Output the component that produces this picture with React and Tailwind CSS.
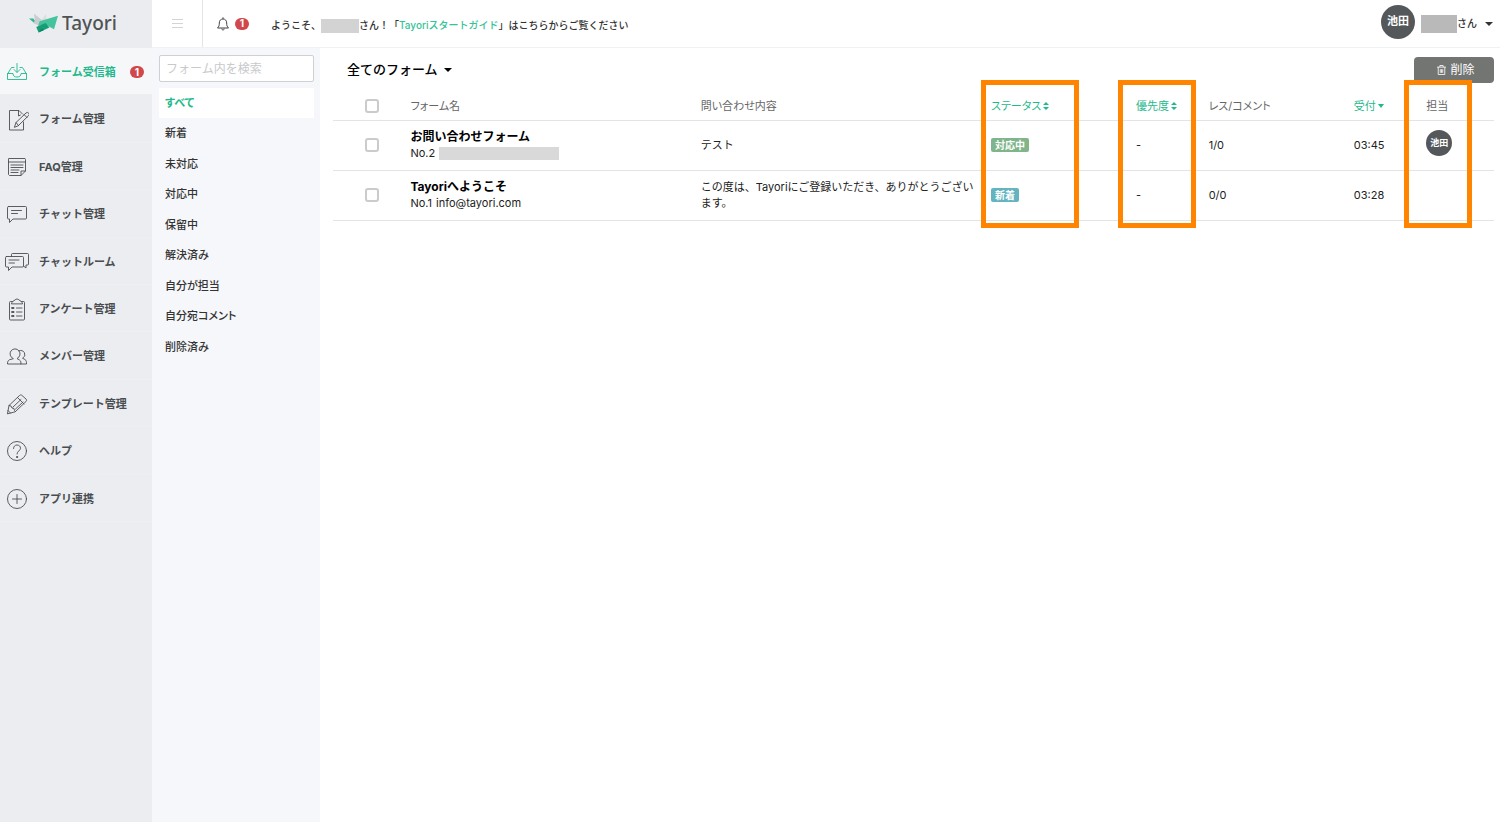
import clsx from 'clsx'

const navItems = [
  { label: 'フォーム受信箱', icon: InboxIcon, active: true, count: 1 },
  { label: 'フォーム管理', icon: FormIcon },
  { label: 'FAQ管理', icon: FaqIcon },
  { label: 'チャット管理', icon: ChatIcon },
  { label: 'チャットルーム', icon: ChatRoomIcon },
  { label: 'アンケート管理', icon: SurveyIcon },
  { label: 'メンバー管理', icon: MembersIcon },
  { label: 'テンプレート管理', icon: PencilIcon },
  { label: 'ヘルプ', icon: HelpIcon },
  { label: 'アプリ連携', icon: AppsIcon },
]

const filters = ['すべて', '新着', '未対応', '対応中', '保留中', '解決済み', '自分が担当', '自分宛コメント', '削除済み']

const rows = [
  {
    id: 2,
    title: 'お問い合わせフォーム',
    email: null,
    body: 'テスト',
    status: '対応中',
    statusClass: 'bg-[#80b58b]',
    replies: '1/0',
    time: '03:45',
    owner: '池田',
  },
  {
    id: 1,
    title: 'Tayoriへようこそ',
    email: 'info@tayori.com',
    body: 'この度は、Tayoriにご登録いただき、ありがとうございます。',
    status: '新着',
    statusClass: 'bg-[#64b4c0]',
    replies: '0/0',
    time: '03:28',
    owner: null,
  },
]

function LineIcon({ children }) {
  return (
    <svg viewBox="0 0 24 24" className="size-6 shrink-0" fill="none" stroke="currentColor" strokeWidth="0.9" strokeLinejoin="round" strokeLinecap="round" aria-hidden="true">
      {children}
    </svg>
  )
}

function InboxIcon() {
  return (
    <LineIcon>
      <path d="M9 7.500H6.500L2.500 14v5.500h19V14l-4-6.500H15" />
      <path d="M2.500 13.500H8c0 2.500 1.500 3.500 4 3.500s4-1 4-3.500h5.500M12 3.500V12M9 9.500l3 3 3-3" />
    </LineIcon>
  )
}

function FormIcon() {
  return (
    <LineIcon>
      <path d="M18.500 14v8H4.500V2.500h9.500L17.500 6M13.500 2.500V8l2-1" />
      <path d="m9.500 19 1.500-4.500L21 5a1.800 1.800 0 0 1 2.600 2.600L13.500 17.500zM19 6.500l3 3M11 14.500l2.500 3" />
    </LineIcon>
  )
}

function FaqIcon() {
  return (
    <LineIcon>
      <path d="M4 3.500h16l.5 1V16L16 20.500H4.500l-1-1v-15zM3.500 7h17M16 20.500V16h4.500M6 10h12M6 12.500h12M6 15h8M6 17.500h7" />
    </LineIcon>
  )
}

function ChatIcon() {
  return (
    <LineIcon>
      <path d="M3.500 4.500h17a1 1 0 0 1 1 1V16a1 1 0 0 1-1 1H8l-3.500 3.500V17h-1a1 1 0 0 1-1-1V5.500a1 1 0 0 1 1-1zM6.500 8.500h10M6.500 11.500h6" />
    </LineIcon>
  )
}

function ChatRoomIcon() {
  return (
    <LineIcon>
      <path d="M1.500 6.500h16a1 1 0 0 1 1 1V16a1 1 0 0 1-1 1H7l-3.500 3.500V17h-2a1 1 0 0 1-1-1V7.500a1 1 0 0 1 1-1zM4 10h10M4 13h5.500" />
      <path d="M6.500 6.500v-2a1 1 0 0 1 1-1h15a1 1 0 0 1 1 1V14a1 1 0 0 1-1 1H21v3l-2.500-2" />
    </LineIcon>
  )
}

function SurveyIcon() {
  return (
    <LineIcon>
      <path d="M7.500 4.500h-2a1 1 0 0 0-1 1V22a1 1 0 0 0 1 1h13a1 1 0 0 0 1-1V5.500a1 1 0 0 0-1-1h-2M6.500 6.500c.5-2 2-2.500 3.500-3.500 1-1.300 3-1.300 4 0 1.500 1 3 1.500 3.500 3.500zM11.500 11h5.500M11.500 15h5.500M11.500 19h5.500" />
      <path d="M7 10.500h2v1H7zM7 14.500h2v1H7zM7 18.500h2v1H7z" />
    </LineIcon>
  )
}

function MembersIcon() {
  return (
    <LineIcon>
      <path d="M8 13.500a5 5 0 1 1 4 0l2.500 1.500c1.500 1 1.500 2.500 1.500 4H2.500c0-1.500 0-3 1.500-4z" />
      <path d="M14 5.800a4 4 0 1 1 3.500 7.400l2.500 1.300c1.500 1 1.500 2.500 1.500 4.500H16" />
    </LineIcon>
  )
}

function PencilIcon() {
  return (
    <LineIcon>
      <path d="m2.500 21.500 1.500-8L14.500 3.500c.8-.8 1.800-.8 2.500 0L21 7c.8.8.8 1.800 0 2.500L10.500 19.500zM4 13.500l2 .5 1 2 2 .5.500 2 1 1M12.500 5.500l6.500 6.500M8 15l8-7.500M10.500 17l7.500-7M3 18.500l2.500 2.500" />
    </LineIcon>
  )
}

function HelpIcon() {
  return (
    <LineIcon>
      <circle cx="12" cy="12" r="9.500" />
      <path d="M8.500 9.500c0-2 1.500-3.500 3.500-3.500s3.500 1.300 3.500 3.200c0 2.600-3.500 2.800-3.500 5.800" />
      <circle cx="12" cy="18" r=".6" fill="currentColor" />
    </LineIcon>
  )
}

function AppsIcon() {
  return (
    <LineIcon>
      <circle cx="12" cy="12" r="9.500" />
      <path d="M12 7.500v9M7.500 12h9" />
    </LineIcon>
  )
}

function Logo() {
  return (
    <a href="#" className="flex h-12 items-center justify-center gap-1 bg-[#ebecf0] pr-1.5 pb-0.5 text-[#4f5355]">
      <svg viewBox="0 0 88 60" className="h-5 w-[29px]" aria-hidden="true">
        <path d="M0 16h13l8 10-6 3z" fill="#2fb88f" />
        <path d="M15 1l24 20-8 17-17-7 4-10z" fill="#cbcccf" />
        <path d="M52 3L32 28l10 2 11-10z" fill="#dcdddf" />
        <path d="M32 25L88 8 76 49 52 36 28 39z" fill="#45c39d" />
        <path d="M22 42l28-12 12 14-33 15z" fill="#159f78" />
        <path d="M29 59l9-12 8 4z" fill="#0d8565" />
      </svg>
      <span className="font-['Noto_Sans',sans-serif] text-[19px] font-medium">Tayori</span>
    </a>
  )
}

function Badge({ children }) {
  return (
    <span className="flex h-3 w-3.5 items-center justify-center rounded-full bg-[#d2474b] text-[10px] font-bold text-white">{children}</span>
  )
}

function Caret() {
  return (
    <svg viewBox="0 0 8 4" className="h-1 w-2" fill="currentColor" aria-hidden="true">
      <path d="M0 0h8L4 4z" />
    </svg>
  )
}

function SmallCaret() {
  return (
    <svg viewBox="0 0 6 4" className="h-1 w-1.5" fill="currentColor" aria-hidden="true">
      <path d="M0 0h6L3 4z" />
    </svg>
  )
}

function SortIcon() {
  return (
    <svg viewBox="0 0 6 8" className="h-2 w-1.5" fill="currentColor" aria-hidden="true">
      <path d="M0 3h6L3 0zM0 5h6L3 8z" />
    </svg>
  )
}

function Sidebar() {
  return (
    <aside className="flex w-38 shrink-0 flex-col bg-[#ecedf0]">
      <Logo />
      <nav className="grid h-[474px] auto-rows-fr">
        {navItems.map(({ label, icon: Icon, active, count }) => (
          <a
            key={label}
            href="#"
            className={clsx(
              'flex items-center gap-2.5 border-b border-[#eeeff1] pt-0.5 pr-2 pl-[5px] text-[11px] font-bold',
              active ? 'bg-[#f6f7f9] text-[#1fb98b]' : 'text-[#4a4d50]',
            )}
          >
            <Icon />
            <span className="flex-1 whitespace-nowrap">{label}</span>
            {count && <Badge>{count}</Badge>}
          </a>
        ))}
      </nav>
    </aside>
  )
}

function TopBar() {
  return (
    <header className="flex h-12 shrink-0 items-center border-b border-[#f0f1f3] bg-white text-[10px] text-[#333]">
      <button type="button" aria-label="メニュー" className="flex h-full w-[51px] items-center justify-center border-r border-[#e4e5e7]">
        <svg viewBox="0 0 11 9" className="h-[9px] w-[11px]" stroke="#d4d4d4" aria-hidden="true">
          <path d="M0 .5h11M0 4.500h11M0 8.500h11" />
        </svg>
      </button>
      <button type="button" aria-label="お知らせ" className="ml-3.5 flex items-center gap-1.5">
        <svg viewBox="0 0 12 14" className="h-3.5 w-3" fill="none" stroke="#444" aria-hidden="true">
          <path d="M.5 11h11c-1.500-1.500-1.800-2.500-1.800-5C9.700 3.500 8.200 2 6 2S2.300 3.500 2.300 6c0 2.500-.3 3.500-1.800 5zM6 .3V2M4.800 11.500c0 2 2.400 2 2.400 0" />
        </svg>
        <Badge>1</Badge>
      </button>
      <p className="ml-[22px] flex items-center pt-1 font-medium whitespace-nowrap">
        ようこそ、
        <span className="h-3.5 w-[38px] bg-[#d3d3d3]" />
        さん！「
        <a href="#" className="text-[#35c398]">Tayoriスタートガイド</a>
        」はこちらからご覧ください
      </p>
      <button type="button" className="mr-[7px] ml-auto flex items-center">
        <span className="mb-1 flex size-[34px] items-center justify-center rounded-full bg-[#55585b] text-[11px] font-bold text-white">池田</span>
        <span className="ml-1.5 h-[18px] w-9 bg-[#b9b9b9]" />
        <span className="mr-2 font-medium">さん</span>
        <Caret />
      </button>
    </header>
  )
}

function FilterPanel() {
  return (
    <div className="w-42 shrink-0 bg-[#f6f7fa] pt-[7px] pr-1.5 pl-[7px]">
      <input
        type="search"
        aria-label="フォーム内を検索"
        placeholder="フォーム内を検索"
        className="block h-[27px] w-full rounded-xs border border-[#cfd0d2] bg-white px-1.5 text-xs placeholder:text-[#c8c9cb]"
      />
      <ul className="mt-1.5 grid h-[274px] auto-rows-fr text-[11px] font-medium text-[#333] [font-feature-settings:'palt']">
        {filters.map((label, i) => (
          <li key={label}>
            <a
              href="#"
              className={clsx('flex h-full items-center px-1.5', i === 0 && 'bg-white font-bold text-[#1fb98b]')}
            >
              {label}
            </a>
          </li>
        ))}
      </ul>
    </div>
  )
}

function Checkbox({ label }) {
  return <input type="checkbox" aria-label={label} className="block size-3.5 appearance-none rounded-[3px] border-2 border-[#cbcbcb] bg-white" />
}

// outline drawn over a whole table column
function Highlight({ className }) {
  return <span className={clsx('pointer-events-none absolute h-[148px] border-[5px] border-[#ff8400]', className)} />
}

function FormTable() {
  return (
    <table className="w-full table-fixed text-left text-[11px] text-[#222]">
      <colgroup>
        <col />
        <col className="w-[25%]" />
        <col className="w-[25%]" />
        <col className="w-[12.5%]" />
        <col className="w-[6.25%]" />
        <col className="w-[12.5%]" />
        <col className="w-[6.25%]" />
        <col className="w-[6%]" />
      </colgroup>
      <thead>
        <tr className="h-7 border-b border-[#e3e4e5] text-[#666] [font-feature-settings:'palt'] *:pl-0.5 *:font-normal">
          <th>
            <span className="block pl-[30px]">
              <Checkbox label="すべて選択" />
            </span>
          </th>
          <th>フォーム名</th>
          <th>問い合わせ内容</th>
          <th className="relative text-[#1fb98b]">
            <button type="button" className="flex items-center gap-0.5">
              ステータス
              <SortIcon />
            </button>
            <Highlight className="-top-3 -left-2 w-[98px]" />
          </th>
          <th className="relative text-[#1fb98b]">
            <button type="button" className="flex items-center gap-0.5">
              優先度
              <SortIcon />
            </button>
            <Highlight className="-top-3 -left-4 w-[78px]" />
          </th>
          <th>レス/コメント</th>
          <th className="text-[#1fb98b]">
            <button type="button" className="flex items-center gap-0.5">
              受付
              <SmallCaret />
            </button>
          </th>
          <th className="relative">
            担当
            <Highlight className="-top-3 -left-5 w-[68px]" />
          </th>
        </tr>
      </thead>
      <tbody>
        {rows.map((row) => (
          <tr key={row.id} className="h-[50px] border-b border-[#e3e4e5] *:pl-0.5">
            <td>
              <span className="block pl-[30px]">
                <Checkbox label={row.title} />
              </span>
            </td>
            <td>
              <a href="#" className="block text-xs font-bold text-black">{row.title}</a>
              <span className="flex items-center gap-1">
                No.{row.id}
                {row.email ? <span>{row.email}</span> : <span className="h-[13px] w-30 bg-[#d9d9da]" />}
              </span>
            </td>
            <td className="pr-2">{row.body}</td>
            <td>
              <span className={clsx('inline-block rounded-xs px-1 text-[10px] leading-3.5 font-bold text-white', row.statusClass)}>
                {row.status}
              </span>
            </td>
            <td>-</td>
            <td>{row.replies}</td>
            <td>{row.time}</td>
            <td>
              {row.owner && (
                <span className="mb-1 flex size-[26px] items-center justify-center rounded-full bg-[#55585b] text-[9px] font-bold text-white">{row.owner}</span>
              )}
            </td>
          </tr>
        ))}
      </tbody>
    </table>
  )
}

export default function App() {
  return (
    <div className="flex min-h-screen bg-white font-['Inter','Noto_Sans_CJK_JP',sans-serif]">
      <Sidebar />
      <div className="flex min-w-0 flex-1 flex-col">
        <TopBar />
        <div className="flex flex-1">
          <FilterPanel />
          <main className="min-w-0 flex-1 pt-[9px] pr-1.5 pl-[13px]">
            <div className="flex items-center justify-between pl-3.5">
              <button type="button" className="flex items-center gap-1.5 text-[13px] font-medium text-black">
                全てのフォーム
                <Caret />
              </button>
              <button type="button" className="flex h-[26px] w-20 items-center justify-center gap-1 rounded-sm bg-[#737573] pl-1 text-xs text-white">
                <svg viewBox="0 0 11 12" className="h-2.5 w-[9px]" fill="none" stroke="currentColor" aria-hidden="true">
                  <path d="M0 2.500h11M3.500 2.500v-2h4v2M1.500 2.500v9h8v-9M4 5v4.500M5.500 5v4.500M7 5v4.500" />
                </svg>
                削除
              </button>
            </div>
            <div className="mt-[9px]">
              <FormTable />
            </div>
          </main>
        </div>
      </div>
    </div>
  )
}
